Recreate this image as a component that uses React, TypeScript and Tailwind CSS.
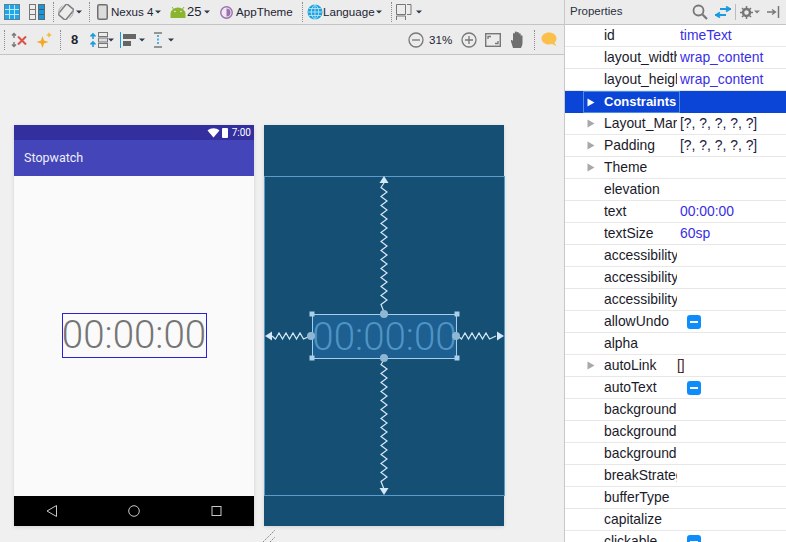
import * as React from "react";

type Row = {
  name: string;
  value?: string;
  valueKind?: "blue" | "list";
  arrow?: boolean;
  toggle?: boolean;
  selected?: boolean;
};

const rows: Row[] = [
  { name: "id", value: "timeText", valueKind: "blue" },
  { name: "layout_width", value: "wrap_content", valueKind: "blue" },
  { name: "layout_height", value: "wrap_content", valueKind: "blue" },
  { name: "Constraints", arrow: true, selected: true },
  { name: "Layout_Margin", value: "[?, ?, ?, ?, ?]", valueKind: "list", arrow: true },
  { name: "Padding", value: "[?, ?, ?, ?, ?]", valueKind: "list", arrow: true },
  { name: "Theme", arrow: true },
  { name: "elevation" },
  { name: "text", value: "00:00:00", valueKind: "blue" },
  { name: "textSize", value: "60sp", valueKind: "blue" },
  { name: "accessibility" },
  { name: "accessibility" },
  { name: "accessibility" },
  { name: "allowUndo", toggle: true },
  { name: "alpha" },
  { name: "autoLink", arrow: true },
  { name: "autoText", toggle: true },
  { name: "background" },
  { name: "background" },
  { name: "background" },
  { name: "breakStrategy" },
  { name: "bufferType" },
  { name: "capitalize" },
  { name: "clickable", toggle: true },
];

// zigzag between two points, for the constraint springs
function spring(x1: number, y1: number, x2: number, y2: number, step = 4.5, amp = 3) {
  const len = Math.hypot(x2 - x1, y2 - y1);
  const ux = (x2 - x1) / len;
  const uy = (y2 - y1) / len;
  const n = Math.floor(len / step);
  let d = `M${x1} ${y1}`;
  for (let i = 1; i < n; i++) {
    const s = i % 2 ? amp : -amp;
    d += ` L${x1 + ux * i * step - uy * s} ${y1 + uy * i * step + ux * s}`;
  }
  return d + ` L${x2} ${y2}`;
}

function Caret({ className = "" }: { className?: string }) {
  return (
    <svg width="6" height="4" viewBox="0 0 6 4" className={className}>
      <path d="M0 0.5H6L3 3.5Z" fill="#2c3a4c" />
    </svg>
  );
}

function Sep({ className = "" }: { className?: string }) {
  return <div className={`h-[20px] border-l border-dotted border-[#8a8a8a] ${className}`} />;
}

function TopToolbar() {
  return (
    <div className="flex h-[25px] shrink-0 items-center border-b border-[#c4c4c4] bg-[#ececec] text-[11.6px] text-[#1d2433]">
      <svg width="16" height="16" viewBox="0 0 16 16" className="ml-[4px]">
        <rect x="0.5" y="0.5" width="15" height="15" fill="#1ea7ea" stroke="#5f7f92" />
        <path d="M5.5 1v14M10.5 1v14M1 5.5h14M1 10.5h14" stroke="#bfe6f8" strokeWidth="1" />
      </svg>
      <svg width="16" height="16" viewBox="0 0 16 16" className="ml-[9px]">
        <rect x="0.5" y="0.5" width="6" height="15" fill="#ececec" stroke="#777" />
        <path d="M1 5.5h5M1 10.5h5" stroke="#777" />
        <rect x="9.5" y="0.5" width="6" height="15" fill="#109be0" stroke="#666" />
        <path d="M10 5.5h5M10 10.5h5" stroke="#555" />
      </svg>
      <Sep className="ml-[8px]" />
      <svg width="16" height="16" viewBox="0 0 16 16" className="ml-[4px]">
        <rect x="3.2" y="1.2" width="9.6" height="13.6" rx="1.5" transform="rotate(40 8 8)" fill="none" stroke="#808080" strokeWidth="1.6" />
        <path d="M1 10a7.500 7.500 0 0 1 3.500-8M15 6a7.500 7.500 0 0 1-3.500 8" fill="none" stroke="#a8a8a8" />
      </svg>
      <Caret className="ml-[2px]" />
      <Sep className="ml-[7px]" />
      <svg width="11" height="16" viewBox="0 0 11 16" className="ml-[7px]">
        <rect x="0.75" y="0.75" width="9.5" height="14.5" rx="1.5" fill="#dcdcdc" stroke="#6f6f6f" strokeWidth="1.5" />
      </svg>
      <span className="ml-[3px] w-[43px] whitespace-nowrap">Nexus 4</span>
      <Caret className="ml-[1px]" />
      <svg width="16" height="11" viewBox="0 0 16 11" className="ml-[9px]">
        <path d="M0.5 7a7.500 6.500 0 0 1 15 0Z" fill="#8bb52e" />
        <rect x="0.5" y="7" width="15" height="4" fill="#8bb52e" />
        <circle cx="5" cy="4.500" r="0.8" fill="#ececec" />
        <circle cx="11" cy="4.500" r="0.8" fill="#ececec" />
        <path d="M3.5 2L2 0M12.5 2L14 0" stroke="#8bb52e" />
      </svg>
      <span className="ml-[1px] w-[15px] text-[13px]">25</span>
      <Caret className="ml-[2px]" />
      <svg width="13" height="13" viewBox="0 0 13 13" className="ml-[10px]">
        <circle cx="6.5" cy="6.5" r="5.75" fill="#f1e6f4" stroke="#9a72ac" strokeWidth="1.4" />
        <path d="M6.5 2.5a4 4 0 0 1 0 8Z" fill="#9a72ac" />
      </svg>
      <span className="ml-[3px] w-[58px] whitespace-nowrap">AppTheme</span>
      <Sep className="ml-[8px]" />
      <svg width="16" height="16" viewBox="0 0 16 16" className="ml-[4px]">
        <circle cx="8" cy="8" r="7.5" fill="#1aa3e0" />
        <path d="M1 8h14M2 4.5h12M2 11.5h12M8 .5v15M8 .5c-5 4-5 11 0 15M8 .5c5 4 5 11 0 15" fill="none" stroke="#cdeaf8" strokeWidth="0.8" />
      </svg>
      <span className="w-[51px] whitespace-nowrap">Language</span>
      <Caret className="ml-[2px]" />
      <Sep className="ml-[9px]" />
      <svg width="16" height="16" viewBox="0 0 16 16" className="ml-[4px]">
        <path d="M0.5 0.5H9.5V10.5H0.5ZM11 0.5H15V10.5H11M0.5 12V16M0.5 12H9.5V16" fill="none" stroke="#777" />
      </svg>
      <Caret className="ml-[4px]" />
    </div>
  );
}

function SecondToolbar() {
  return (
    <div className="flex h-[30px] shrink-0 items-center border-b border-[#c4c4c4] bg-[#ececec] text-[11.6px] text-[#1d2433]">
      <Sep className="ml-[4px]" />
      <svg width="16" height="16" viewBox="0 0 16 16" className="ml-[6px]">
        <path d="M3 2v4M1 3.5L3 1.5 5 3.5M3 10v4M1 12.5L3 14.5 5 12.5" fill="none" stroke="#777" strokeWidth="1.4" />
        <path d="M7 4.5L15 12.5M15 4.5L7 12.5" stroke="#d9534a" strokeWidth="2" />
      </svg>
      <svg width="17" height="17" viewBox="0 0 17 17" className="ml-[9px]">
        <path d="M6.5 5L8 9.5 12.5 11 8 12.5 6.5 17 5 12.5 0.5 11 5 9.5Z" fill="#f4a926" />
        <path d="M13 1L13.9 3.1 16 4 13.9 4.9 13 7 12.1 4.9 10 4 12.1 3.1Z" fill="#f5b93e" />
      </svg>
      <Sep className="ml-[7px]" />
      <span className="ml-[10px] w-[8px] text-[13px] font-bold">8</span>
      <svg width="18" height="16" viewBox="0 0 18 16" className="ml-[11px]">
        <path d="M3 2v5M0.5 4.5L3 2 5.500 4.500M3 10v5M0.500 12.500L3 10 5.500 12.500" fill="none" stroke="#1a9be0" strokeWidth="1.6" />
        <rect x="8.500" y="0.500" width="9" height="4" fill="none" stroke="#777" />
        <rect x="8.500" y="6" width="9" height="4" fill="#ddd" stroke="#777" />
        <rect x="8.500" y="11.500" width="9" height="4" fill="none" stroke="#777" />
      </svg>
      <Caret />
      <svg width="18" height="16" viewBox="0 0 18 16" className="ml-[6px]">
        <rect x="0" y="0" width="1" height="16" fill="#1a9be0" />
        <rect x="3" y="2" width="13" height="5" fill="#666" />
        <rect x="3" y="9" width="8" height="5" fill="#666" />
      </svg>
      <Caret className="ml-[1px]" />
      <svg width="10" height="16" viewBox="0 0 10 16" className="ml-[8px]">
        <path d="M1 1H9M1 15H9" stroke="#777" strokeWidth="1.500" />
        <path d="M5 3V13" stroke="#1a9be0" strokeWidth="1.500" strokeDasharray="2 1.500" />
      </svg>
      <Caret className="ml-[5px]" />
      <svg width="16" height="16" viewBox="0 0 16 16" className="ml-[234px]">
        <circle cx="8" cy="8" r="7" fill="none" stroke="#777" strokeWidth="1.300" />
        <path d="M4 8H12" stroke="#777" strokeWidth="1.300" />
      </svg>
      <span className="ml-[5px] w-[26px] whitespace-nowrap">31%</span>
      <svg width="16" height="16" viewBox="0 0 16 16" className="ml-[6px]">
        <circle cx="8" cy="8" r="7" fill="none" stroke="#777" strokeWidth="1.300" />
        <path d="M4 8H12M8 4V12" stroke="#777" strokeWidth="1.300" />
      </svg>
      <svg width="16" height="14" viewBox="0 0 16 14" className="ml-[8px]">
        <rect x="0.700" y="0.700" width="14.600" height="12.600" fill="none" stroke="#777" strokeWidth="1.400" />
        <path d="M3 6V3.500H6M13 8V10.500H10" fill="none" stroke="#777" strokeWidth="1.300" />
      </svg>
      <svg width="16" height="17" viewBox="0 0 16 17" className="ml-[9px]">
        <path d="M3 17L1 10.500C.5 9 2 8.500 3 10V3c0-1.200 1.600-1.200 1.800 0V1.500c0-1.200 2-1.200 2 0V2c0-1.200 2-1.200 2 0v1c.2-1 1.900-1 1.900.2V5c.2-1 1.800-1 1.800.2V12c0 2-.8 3.500-1.500 5Z" fill="#6f6f6f" />
      </svg>
      <Sep className="ml-[8px]" />
      <svg width="16" height="15" viewBox="0 0 16 15" className="ml-[6px]">
        <path d="M8 0.500c4.200 0 7.500 2.600 7.500 6 0 1.700-.8 3.200-2 4.200L15.500 14 11 12.100C10 12.400 9 12.500 8 12.500 3.800 12.500.5 9.900.5 6.500S3.800.5 8 .5Z" fill="#fbbf4c" />
      </svg>
    </div>
  );
}

function DevicePhone() {
  return (
    <div className="flex h-[401px] w-[240px] flex-col shadow-[0_1px_4px_rgba(0,0,0,0.12)]">
      <div className="flex h-[15px] items-center justify-end bg-[#342f9f] pr-[3px] font-['Roboto',sans-serif] text-[10px] text-white">
        <svg width="13" height="10" viewBox="0 0 13 10">
          <path d="M0.500 2.500C4 -0.500 9 -0.500 12.500 2.500L6.500 9.500Z" fill="white" />
        </svg>
        <div className="ml-[2px] h-[10px] w-[6px] rounded-[1px] bg-white" />
        <span className="ml-[4px]">7:00</span>
      </div>
      <div className="flex h-[36px] items-center bg-[#4345b9] pl-[10px] font-['Roboto',sans-serif] text-[12.500px] text-[#eeeef8]">
        Stopwatch
      </div>
      <div className="flex flex-1 items-center justify-center bg-[#fafafa]">
        <div className="mb-[2px] flex h-[45px] w-[145px] items-center justify-center border border-[#2a22d8] font-['Roboto',sans-serif] text-[38.500px] font-light text-[#757575]">
          00:00:00
        </div>
      </div>
      <div className="flex h-[30px] items-center bg-black">
        <svg width="240" height="30" viewBox="0 0 240 30" fill="none" stroke="#c8c8c8" strokeWidth="1">
          <path d="M33 15L42.500 9.500V20.500Z" />
          <circle cx="120" cy="15" r="5.300" />
          <rect x="198" y="10.500" width="9" height="9" />
        </svg>
      </div>
    </div>
  );
}

function BlueprintPhone() {
  const handles: [number, number][] = [
    [48, 189],
    [193, 189],
    [48, 233],
    [193, 233],
  ];
  const anchors: [number, number][] = [
    [120, 189],
    [120, 233],
    [47, 211],
    [192, 211],
  ];
  return (
    <div className="relative h-[401px] w-[240px] bg-[#154f74] shadow-[0_1px_4px_rgba(0,0,0,0.12)]">
      <div className="absolute left-0 top-[51px] h-[320px] w-[241px] border border-[#5b9bcb]" />
      <div className="absolute left-[48px] top-[189px] flex h-[45px] w-[145px] items-center justify-center border border-[#a4d0ee] bg-[#1c5f90] font-['Roboto',sans-serif] text-[38.500px] font-light text-[#4f94c4]">
        00:00:00
      </div>
      <svg width="241" height="401" viewBox="0 0 241 401" className="absolute left-0 top-0">
        <g fill="none" stroke="#d3e9f8" strokeWidth="1.200">
          <path d={spring(120, 58, 120, 187)} />
          <path d={spring(120, 235, 120, 364)} />
          <path d={spring(8, 211, 46, 211, 3.500)} />
          <path d={spring(194, 211, 232, 211, 3.500)} />
        </g>
        <g fill="#d3e9f8">
          <path d="M120 51L124.500 58H115.500Z" />
          <path d="M120 370L124.500 363H115.500Z" />
          <path d="M1 211L8 206.500V215.500Z" />
          <path d="M240 211L233 206.500V215.500Z" />
        </g>
        {handles.map(([x, y]) => (
          <rect key={`${x}-${y}`} x={x - 2.500} y={y - 2.500} width="5" height="5" fill="#a9d0ea" />
        ))}
        {anchors.map(([x, y]) => (
          <circle key={`${x}-${y}`} cx={x} cy={y} r="4" fill="#8fb7d4" />
        ))}
      </svg>
    </div>
  );
}

function PropertyRow({ row }: { row: Row }) {
  if (row.selected) {
    return (
      <div className="flex h-[22px] shrink-0 items-center bg-[#0a45d8] font-bold text-white">
        <div className="ml-[18px] flex h-[22px] w-[97px] shrink-0 items-center border border-[#4a8ee0] pl-[3px]">
          <svg width="8" height="9" viewBox="0 0 8 9" className="mr-[9px] shrink-0">
            <path d="M0.500 0.500L7.500 4.500L0.500 8.500Z" fill="#ffffff" />
          </svg>
          <span className="overflow-hidden whitespace-nowrap text-[13px]">{row.name}</span>
        </div>
      </div>
    );
  }
  return (
    <div className="flex h-[22px] shrink-0 items-center border-b border-[#e8e8e8] bg-white text-[#1a1a2a]">
      <div className="flex w-[115px] shrink-0 items-center pl-[39px]">
        {row.arrow && (
          <svg width="8" height="9" viewBox="0 0 8 9" className="-ml-[17px] mr-[9px] shrink-0">
            <path d="M0.500 0.500L7.500 4.500L0.500 8.500Z" fill="#a8a8a8" />
          </svg>
        )}
        <span className="w-[73px] shrink-0 overflow-hidden whitespace-nowrap">{row.name}</span>
      </div>
      {row.value && (
        <span className={`whitespace-nowrap ${row.valueKind === "blue" ? "text-[#3a2ee6]" : "text-[#202040]"}`}>
          {row.value}
        </span>
      )}
      {row.name === "autoLink" && <span className="-ml-[3px] text-[#4a2020]">[]</span>}
      {row.toggle && (
        <div className="ml-[7px] flex h-[14px] w-[14px] items-center justify-center rounded-[3px] bg-[#0d8dfb]">
          <div className="h-[2px] w-[8px] bg-white" />
        </div>
      )}
    </div>
  );
}

function PropertiesPanel() {
  return (
    <div className="flex w-[222px] shrink-0 flex-col overflow-hidden border-l border-[#c8c8c8] bg-white text-[13.9px]">
      <div className="flex h-[25px] shrink-0 items-center border-b border-[#c4c4c4] bg-[#ececec] pl-[5px] text-[11.500px] text-[#2a3040]">
        <span className="w-[122px]">Properties</span>
        <svg width="16" height="16" viewBox="0 0 16 16">
          <circle cx="6.500" cy="6.500" r="5" fill="none" stroke="#777" strokeWidth="1.800" />
          <path d="M10.500 10.500L15 15" stroke="#777" strokeWidth="2.200" />
        </svg>
        <svg width="16" height="12" viewBox="0 0 16 12" className="ml-[7px]">
          <path d="M16 3H5M11 0.500L15 3 11 5.500" fill="none" stroke="#1a9be0" strokeWidth="1.800" />
          <path d="M0 9H11M5 6.500L1 9 5 11.500" fill="none" stroke="#1a9be0" strokeWidth="1.800" />
        </svg>
        <div className="ml-[4px] h-[16px] border-l border-[#bbb]" />
        <svg width="13" height="13" viewBox="0 0 13 13" className="ml-[4px]">
          <circle cx="6.500" cy="6.500" r="3.500" fill="none" stroke="#777" strokeWidth="2.500" />
          <path d="M6.500 0V13M0 6.500H13M2 2L11 11M11 2L2 11" stroke="#777" strokeWidth="1.500" strokeDasharray="2.500 8 2.500 0" />
        </svg>
        <Caret className="ml-[1px] opacity-60" />
        <svg width="13" height="12" viewBox="0 0 13 12" className="ml-[7px]">
          <path d="M0 6H8M5 3.500L8.500 6 5 8.500" fill="none" stroke="#777" strokeWidth="1.300" />
          <path d="M11.500 0V12" stroke="#777" strokeWidth="1.500" />
        </svg>
      </div>
      {rows.map((row, i) => (
        <PropertyRow key={i} row={row} />
      ))}
    </div>
  );
}

export default function App() {
  return (
    <div className="flex h-[542px] w-[786px] overflow-hidden bg-[#f0f0f0] font-['Liberation_Sans',Arial,sans-serif]">
      <div className="flex w-[564px] shrink-0 flex-col">
        <TopToolbar />
        <SecondToolbar />
        <div className="flex flex-1 gap-[10px] pl-[14px] pt-[70px]">
          <DevicePhone />
          <BlueprintPhone />
        </div>
        <svg width="16" height="16" viewBox="0 0 16 16" className="-mt-[16px] ml-[262px]">
          <path d="M1 16L13 4M8 16L13 11" stroke="#666" strokeWidth="0.800" strokeDasharray="1.500 1" />
        </svg>
      </div>
      <PropertiesPanel />
    </div>
  );
}
